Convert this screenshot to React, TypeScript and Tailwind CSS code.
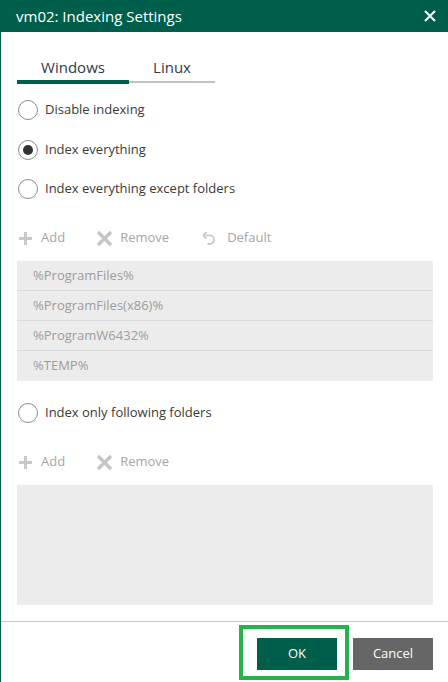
import React, { useState } from 'react';

// --- ICONS ---
const CloseIcon = () => (
  <svg width="14" height="14" viewBox="0 0 14 14" fill="none" stroke="white" strokeWidth="2">
    <path d="M2 2l10 10M12 2L2 12" />
  </svg>
);

const PlusIcon = () => (
  <svg width="13" height="13" viewBox="0 0 13 13" fill="#c9c9c9">
    <rect x="5" y="0" width="3" height="13" />
    <rect x="0" y="5" width="13" height="3" />
  </svg>
);

const RemoveIcon = () => (
  <svg width="17" height="17" viewBox="0 0 17 17" fill="none" stroke="#c4c4c4" strokeWidth="3.2">
    <path d="M2 2l13 13M15 2L2 15" />
  </svg>
);

const UndoIcon = () => (
  <svg width="15" height="15" viewBox="0 0 15 15" fill="none" stroke="#c4c4c4" strokeWidth="1.6">
    <path d="M3.5 4.5h5.5a4.2 4.2 0 010 8.4H6.5" />
    <path d="M2 4.5l3.5-3.5M2 4.5l3.5 3.2" fill="none" />
  </svg>
);
// --- END ICONS ---

const Radio = ({ checked, label, onClick }: { checked: boolean; label: string; onClick: () => void }) => (
  <div className="flex items-center h-6 cursor-pointer" onClick={onClick}>
    <span className="w-[20px] h-[20px] rounded-full border border-[#8c8c8c] flex items-center justify-center ml-[1px]">
      {checked && <span className="w-[10px] h-[10px] rounded-full bg-[#333]" />}
    </span>
    <span className="ml-[7px] text-[13px] text-[#3a3a3a]">{label}</span>
  </div>
);

const ToolButton = ({ icon, label, gap }: { icon: React.ReactNode; label: string; gap: string }) => (
  <div className="flex items-center h-6 text-[13px] text-[#a6a6a6]">
    {icon}
    <span className={gap}>{label}</span>
  </div>
);

const folders = ['%ProgramFiles%', '%ProgramFiles(x86)%', '%ProgramW6432%', '%TEMP%'];

export default function App() {
  const [mode, setMode] = useState(1);

  return (
    <div
      className="w-[448px] h-[682px] flex flex-col bg-white border-l border-[#005f4b] overflow-hidden"
      style={{ fontFamily: '"Open Sans", "Noto Sans", sans-serif' }}
    >
      {/* Header */}
      <div className="h-8 bg-[#005f4b] flex items-center justify-between pl-[15px] pr-[11px] shrink-0">
        <span className="text-white text-[15px]">vm02: Indexing Settings</span>
        <CloseIcon />
      </div>

      {/* Body */}
      <div className="flex-1 pl-4 pr-[15px]">
        {/* Tabs */}
        <div className="mt-[25px]">
          <div className="flex h-5 leading-5 text-[15px] text-[#2f3b45]">
            <span className="w-[112px] text-center">Windows</span>
            <span className="w-[86px] text-center">Linux</span>
          </div>
          <div className="flex items-center mt-[3px] h-[4px]">
            <span className="w-[112px] h-[4px] bg-[#005f4b]" />
            <span className="w-[86px] h-[2px] bg-[#c3c3c3]" />
          </div>
        </div>

        <div className="mt-[14px]">
          <Radio checked={mode === 0} label="Disable indexing" onClick={() => setMode(0)} />
        </div>
        <div className="mt-4">
          <Radio checked={mode === 1} label="Index everything" onClick={() => setMode(1)} />
        </div>
        <div className="mt-[15px]">
          <Radio checked={mode === 2} label="Index everything except folders" onClick={() => setMode(2)} />
        </div>

        {/* Toolbar 1 */}
        <div className="flex items-center mt-[25px] pl-[2px]">
          <ToolButton icon={<PlusIcon />} label="Add" gap="ml-[9px]" />
          <div className="ml-[31px]">
            <ToolButton icon={<RemoveIcon />} label="Remove" gap="ml-[7px]" />
          </div>
          <div className="ml-[32px]">
            <ToolButton icon={<UndoIcon />} label="Default" gap="ml-[11px]" />
          </div>
        </div>

        {/* Excluded list */}
        <div className="mt-[11px] bg-[#ececec]">
          {folders.map((f, i) => (
            <div
              key={f}
              className={`h-[30px] flex items-center pl-4 text-[13px] text-[#9c9c9c] ${
                i < folders.length - 1 ? 'border-b border-[#dadada]' : ''
              }`}
            >
              {f}
            </div>
          ))}
        </div>

        <div className="mt-[20px]">
          <Radio checked={mode === 3} label="Index only following folders" onClick={() => setMode(3)} />
        </div>

        {/* Toolbar 2 */}
        <div className="flex items-center mt-[25px] pl-[2px]">
          <ToolButton icon={<PlusIcon />} label="Add" gap="ml-[9px]" />
          <div className="ml-[31px]">
            <ToolButton icon={<RemoveIcon />} label="Remove" gap="ml-[7px]" />
          </div>
        </div>

        <div className="mt-[11px] h-[120px] bg-[#ececec]" />
      </div>

      {/* Footer */}
      <div className="h-[61px] shrink-0 border-t border-[#c8c8c8] flex justify-end items-start pt-4 pr-[15px] gap-4">
        <div className="relative">
          <button className="w-20 h-8 bg-[#005f4b] text-white text-[13px]">OK</button>
          <span className="absolute -left-[18px] -right-[12px] -top-[13px] -bottom-[10px] border-4 border-[#25b24a] pointer-events-none" />
        </div>
        <button className="w-20 h-8 bg-[#666666] text-white text-[13px]">Cancel</button>
      </div>
    </div>
  );
}
